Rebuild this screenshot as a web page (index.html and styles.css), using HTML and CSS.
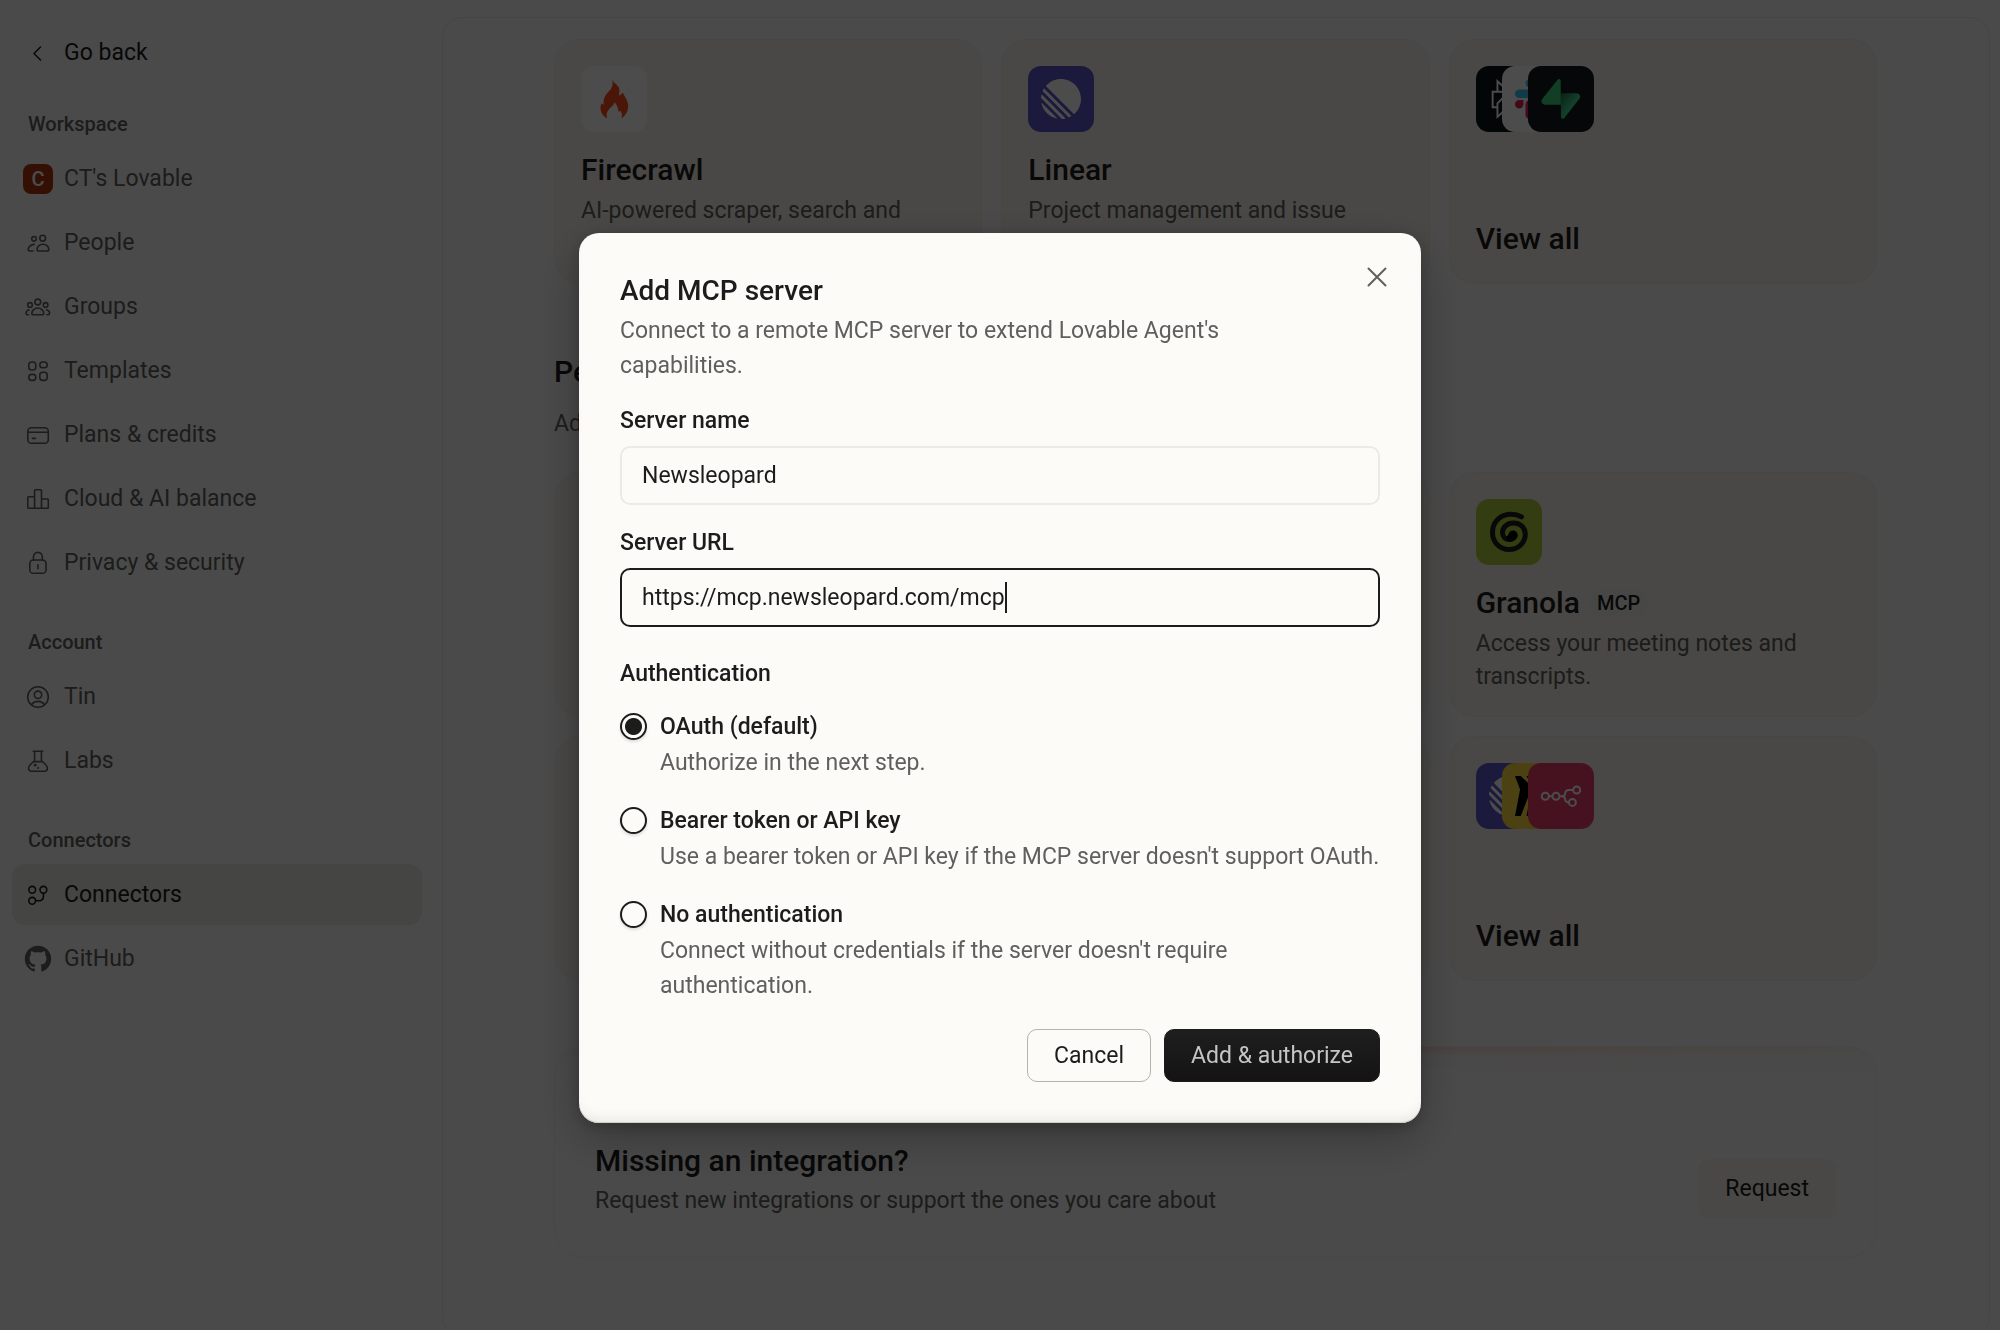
FILE: index.html
```html
<!DOCTYPE html>
<html lang="en">
    <head>
        <title>Connectors</title>
        <meta charset="UTF-8">
        <meta name="viewport" content="width=device-width, initial-scale=1.0">
        <link rel="stylesheet" href="styles.css">
    </head>
    <body>
        <!-- shared logos -->
        <svg class="defs" aria-hidden="true">
            <symbol id="linear" viewBox="0 0 100 100">
                <path fill="#fff" d="M1.22541 61.5228c-.2225-.9485.90748-1.5459 1.59638-.857L39.3342 97.1782c.6889.6889.0915 1.8189-.857 1.5964C20.0515 94.4522 5.54779 79.9485 1.22541 61.5228ZM.00189 46.8891c-.01764.2833.08887.5599.28957.7606L52.3503 99.7085c.2007.2007.4773.3075.7606.2896 2.3692-.1476 4.6938-.46 6.9624-.9259.7645-.157 1.0301-1.0963.4782-1.6481L2.57595 39.4485c-.55186-.5519-1.49117-.2863-1.64817.4782-.46592 2.2686-.77832 4.5932-.92589 6.9624ZM4.21093 29.7054c-.16649.3738-.08169.8106.20765 1.1l64.77602 64.776c.2894.2894.7262.3742 1.1.2077 1.7861-.7956 3.5171-1.6927 5.1855-2.684.5521-.328.6373-1.0867.1832-1.5407L8.43566 24.3367c-.45409-.4541-1.21271-.3689-1.54074.1832-.99132 1.6684-1.88843 3.3994-2.68399 5.1855ZM12.6587 18.074c-.3701-.3701-.393-.9637-.0443-1.3541C21.7795 6.45931 35.1114 0 49.9519 0 77.5927 0 100 22.4073 100 50.0481c0 14.8405-6.4593 28.1724-16.7199 37.3375-.3903.3487-.984.3258-1.3542-.0443L12.6587 18.074Z"/>
            </symbol>
        </svg>

        <div class="app">
            <nav class="sidebar">
                <a class="nav-item back" href="#">
                    <svg viewBox="0 0 30 30"><path d="M17.5 9 11 15.5l6.5 6.5"/></svg>
                    Go back
                </a>

                <h2>Workspace</h2>
                <a class="nav-item" href="#"><span class="avatar">C</span>CT's Lovable</a>
                <a class="nav-item" href="#">
                    <svg viewBox="0 0 30 30"><circle cx="11" cy="10.8" r="2.3"/><circle cx="19.7" cy="10.2" r="2.9"/><path d="M14 21.4c0-3 3-5.2 6-5.2s5.8 2.2 5.8 5.2c0 1-.8 1.6-1.8 1.6h-8.2c-1 0-1.8-.6-1.8-1.6zM11.2 16.4c-3.4.2-6 2.5-6 4.9 0 1.1.8 1.7 1.9 1.7H10"/></svg>
                    People
                </a>
                <a class="nav-item" href="#">
                    <svg viewBox="0 0 30 30"><circle cx="14.8" cy="10" r="2.9"/><circle cx="7" cy="12.9" r="2.3"/><circle cx="22.6" cy="12.9" r="2.3"/><path d="M8.8 21.4c0-3 3-5.4 6-5.4s6 2.4 6 5.4c0 1-.8 1.4-1.8 1.4h-8.4c-1 0-1.8-.4-1.8-1.4zM6 17.8c-1.7.6-3 1.8-3 3.3 0 1 .6 1.7 1.5 1.7h1M23.6 17.8c1.7.6 3 1.8 3 3.3 0 1-.6 1.7-1.5 1.7h-1"/></svg>
                    Groups
                </a>
                <a class="nav-item" href="#">
                    <svg viewBox="0 0 30 30"><rect x="5.8" y="6" width="7" height="8" rx="2.8"/><rect x="16.8" y="6" width="7.4" height="5.8" rx="2.8"/><rect x="5.8" y="18.4" width="7" height="6" rx="2.8"/><rect x="16.8" y="16.2" width="7.4" height="8.2" rx="2.8"/></svg>
                    Templates
                </a>
                <a class="nav-item" href="#">
                    <svg viewBox="0 0 30 30"><rect x="4.8" y="7.8" width="20.5" height="15.5" rx="3.6"/><path d="M4.8 12.2h20.5M9.4 18.4h3"/></svg>
                    Plans &amp; credits
                </a>
                <a class="nav-item" href="#">
                    <svg viewBox="0 0 30 30"><path d="M11.6 24.2V6.6c0-.5.3-.8.8-.8h5.3c.5 0 .8.3.8.8v17.6M11.6 12.7h-6c-.5 0-.8.3-.8.8v9.9c0 .5.3.8.8.8h18.9c.5 0 .8-.3.8-.8v-7.6c0-.5-.3-.8-.8-.8h-6"/></svg>
                    Cloud &amp; AI balance
                </a>
                <a class="nav-item" href="#">
                    <svg viewBox="0 0 30 30"><rect x="6.8" y="12" width="16.2" height="13.3" rx="3.4"/><path d="M10.5 12V8.8a4.4 4.4 0 0 1 8.800 0V12M14.9 16.8v4"/></svg>
                    Privacy &amp; security
                </a>

                <h2>Account</h2>
                <a class="nav-item" href="#">
                    <svg viewBox="0 0 30 30"><circle cx="15" cy="15" r="10.3"/><circle cx="15" cy="12.8" r="3.7"/><path d="M8.4 22.7c1.6-2.2 3.9-3.3 6.6-3.3s5 1.1 6.6 3.3"/></svg>
                    Tin
                </a>
                <a class="nav-item" href="#">
                    <svg viewBox="0 0 30 30"><path d="M10.2 5.2h9.6M11.6 5.2v8.4c0 .8-.3 1.4-.9 1.9-2 1.7-5.1 4.4-5.1 6.7 0 1.8 1.2 3 3 3h12.8c1.8 0 3-1.2 3-3 0-2.3-3.1-5-5.1-6.7-.6-.5-.9-1.1-.9-1.9V5.2M10.4 15.6h9.2"/><circle class="dot" cx="12.2" cy="19.2" r="1.4"/><circle class="dot" cx="15.2" cy="22" r="1"/></svg>
                    Labs
                </a>

                <h2>Connectors</h2>
                <a class="nav-item active" href="#">
                    <svg viewBox="0 0 30 30"><circle cx="9.2" cy="9.8" r="3.4"/><circle cx="20.4" cy="9.8" r="3.4"/><circle cx="9.2" cy="20.8" r="3.4"/><path d="M20.4 13.2v3c0 2.8-1.8 4.6-4.6 4.6h-3.2"/></svg>
                    Connectors
                </a>
                <a class="nav-item" href="#">
                    <svg class="solid" viewBox="-1.1 -1.1 18.2 18.2"><path d="M8 0C3.58 0 0 3.58 0 8c0 3.54 2.29 6.53 5.47 7.59.4.07.55-.17.55-.38 0-.19-.01-.82-.01-1.49-2.01.37-2.53-.49-2.69-.94-.09-.23-.48-.94-.82-1.13-.28-.15-.68-.52-.01-.53.63-.01 1.08.58 1.23.82.72 1.21 1.87.87 2.33.66.07-.52.28-.87.51-1.07-1.78-.2-3.64-.89-3.64-3.95 0-.87.31-1.59.82-2.15-.08-.2-.36-1.02.08-2.12 0 0 .67-.21 2.2.82.64-.18 1.32-.27 2-.27s1.36.09 2 .27c1.53-1.04 2.2-.82 2.2-.82.44 1.1.16 1.92.08 2.12.51.56.82 1.27.82 2.15 0 3.07-1.87 3.75-3.65 3.95.29.25.54.73.54 1.48 0 1.07-.01 1.93-.01 2.2 0 .21.15.46.55.38A8.01 8.01 0 0 0 16 8c0-4.42-3.58-8-8-8z"/></svg>
                    GitHub
                </a>
            </nav>

            <main class="panel">
                <div class="cards">
                    <article class="card">
                        <svg class="tile firecrawl" viewBox="0 0 66 66"><path fill="#fa4a19" d="M31.3 13.5c1.2 3.4 4.6 4.8 6.3 7.6 1.4 2.6.9 5.6.1 8.4 2-.5 3.2-1.6 4.2-3.3 1 4.3 5.3 7.6 5.3 13.8 0 5.4-2.6 9.4-6.700 12.5.6-2.8.8-5.200-1-7.800-.7.8-1.300 1-2 .8-.4-3.400-1.700-7.200-4.200-9.200-.2 3.200-3.200 4.600-5.300 7-2.300 2.600-3 5.800-1.800 9.200-4.300-2.600-6.700-6.400-6.700-10.800 0-1.700.3-3.200.9-4.300.6.7 1.300 1.100 2.200 1.200-.5-7.300 2.600-10.600 5.400-13.300 3.200-3.200 4.400-6.700 3.300-11.800z"/></svg>
                        <h3>Firecrawl</h3>
                        <p>AI-powered scraper, search and</p>
                    </article>
                    <article class="card">
                        <svg class="tile linear" viewBox="0 0 66 66"><use href="#linear" x="13" y="13" width="40" height="40"/></svg>
                        <h3>Linear</h3>
                        <p>Project management and issue</p>
                    </article>
                    <article class="card view-all">
                        <div class="stack">
                            <svg class="tile perplexity" viewBox="0 0 66 66"><path fill="#fff" transform="translate(13 13) scale(1.667)" d="M22.3977 7.0896h-2.3106V.0676l-7.5094 6.3542V.1577h-1.1554v6.1966L4.4904 0v7.0896H1.6023v10.3976h2.8882V24l6.932-6.3591v6.2005h1.1554v-6.0469l6.9318 6.1807v-6.4879h2.8882V7.0896zm-3.4657-4.531v4.531h-5.355l5.355-4.531zm-13.2862.0676 4.8691 4.4634H5.6458V2.6262zM2.7576 16.332V8.245h7.8476l-6.1149 6.1147v1.9723H2.7576zm2.8882 5.0404v-3.8852h.0001v-2.6488l5.7763-5.7764v7.0111l-5.7764 5.2993zm12.7086.0248-5.7766-5.1509V9.0618l5.7766 5.7766v6.5588zm2.8882-5.0652h-1.733v-1.9723L13.3948 8.245h7.8478v8.087z"/></svg>
                            <svg class="tile slack" viewBox="0 0 66 66"><g transform="translate(13 13) scale(.326)"><path fill="#e01e5a" d="M25.8 77.6a12.9 12.9 0 1 1-12.9-12.9h12.9zM32.3 77.6a12.9 12.9 0 0 1 25.8 0v32.3a12.9 12.9 0 0 1-25.8 0z"/><path fill="#36c5f0" d="M45.2 25.8a12.9 12.9 0 1 1 12.9-12.9v12.9zM45.2 32.3a12.9 12.9 0 0 1 0 25.8H12.9a12.9 12.9 0 0 1 0-25.8z"/></g></svg>
                            <svg class="tile supabase" viewBox="0 0 66 66">
                                <linearGradient id="bolt" x1="0" y1="0" x2="1" y2="1"><stop offset="0" stop-color="#1f6b45"/><stop offset=".5" stop-color="#3ecf8e"/></linearGradient>
                                <g transform="translate(13.5 13) scale(.355)"><path fill="url(#bolt)" d="M63.7076 110.284C60.8481 113.885 55.0502 111.912 54.9813 107.314L53.9738 40.0627H99.1935C107.384 40.0627 111.952 49.5228 106.859 55.9374Z"/><path fill="#3ecf7e" d="M45.317 2.07103C48.1765-1.53037 53.9745.442937 54.0434 5.041L54.4849 72.2922H9.83113C1.64038 72.2922-2.92775 62.8321 2.1655 56.4175Z"/></g>
                            </svg>
                        </div>
                        <h3>View all</h3>
                    </article>
                </div>

                <h2 class="section-title">Personal</h2>
                <p class="section-text">Add</p>

                <div class="cards">
                    <article class="card"></article>
                    <article class="card"></article>
                    <article class="card">
                        <svg class="tile granola" viewBox="0 0 66 66"><path fill="none" stroke="#1c1c1c" stroke-width="5" stroke-linecap="round" d="M45.5 17.8C42 15.8 38 15 33.5 15.3 23 16 16.5 24 16.5 33.5c0 10 7.5 17 16.5 17 9.5 0 16.3-7 16.3-15.5 0-7-5.8-11-11.8-11-6.5 0-11 4.3-11 9.5 0 4.5 3 7 7 7"/><circle cx="37" cy="36" r="4.6"/><path d="M33 43c5 0 8.5-3 8.6-7l-7-2-4.6 4z"/></svg>
                        <h3>Granola <span class="badge">MCP</span></h3>
                        <p>Access your meeting notes and transcripts.</p>
                    </article>
                    <article class="card"></article>
                    <article class="card"></article>
                    <article class="card view-all">
                        <div class="stack">
                            <svg class="tile linear" viewBox="0 0 66 66"><use href="#linear" x="13" y="13" width="40" height="40"/></svg>
                            <svg class="tile miro" viewBox="0 0 66 66"><path transform="translate(13 13) scale(1.667)" d="M17.392 0H13.9L17 4.808 10.444 0H6.949l3.102 6.3L3.494 0H0l3.05 8.131L0 24h3.494L10.05 6.985 6.949 24h3.494L17 5.494 13.899 24h3.493L24 3.672z"/></svg>
                            <svg class="tile n8n" viewBox="0 0 66 66"><g fill="none" stroke="#fff" stroke-width="2"><circle cx="17.3" cy="33.3" r="3.5"/><circle cx="28" cy="33.3" r="3.5"/><circle cx="48.7" cy="27" r="3.5"/><circle cx="44.4" cy="39.4" r="3.5"/><path d="M20.8 33.3h3.7M31.5 33.3H34c2.2 0 2.800-1 3-2.500.4-2.600 1.200-3.800 3.600-3.800h4.600M34 33.300c2.200 0 2.800 1 3 2.500.3 2.400.9 3.600 3.900 3.600"/></g></svg>
                        </div>
                        <h3>View all</h3>
                    </article>
                </div>

                <section class="missing">
                    <div>
                        <h3>Missing an integration?</h3>
                        <p>Request new integrations or support the ones you care about</p>
                    </div>
                    <button type="button" class="request">Request</button>
                </section>
            </main>
        </div>

        <div class="overlay">
            <form class="modal" role="dialog" aria-labelledby="modal-title">
                <button type="button" class="close" aria-label="Close">
                    <svg viewBox="0 0 20 20"><path d="m1.5 1.5 17 17m0-17-17 17"/></svg>
                </button>
                <h1 id="modal-title">Add MCP server</h1>
                <p class="intro">Connect to a remote MCP server to extend Lovable Agent's capabilities.</p>

                <label class="field-label" for="server-name">Server name</label>
                <input class="field" id="server-name" type="text" value="Newsleopard">

                <label class="field-label" for="server-url">Server URL</label>
                <input class="field current" id="server-url" type="text" value="https://mcp.newsleopard.com/mcp">

                <fieldset>
                    <legend>Authentication</legend>
                    <div class="option">
                        <input type="radio" name="auth" id="oauth" checked>
                        <label for="oauth">OAuth (default)</label>
                        <p>Authorize in the next step.</p>
                    </div>
                    <div class="option">
                        <input type="radio" name="auth" id="bearer">
                        <label for="bearer">Bearer token or API key</label>
                        <p>Use a bearer token or API key if the MCP server doesn't support OAuth.</p>
                    </div>
                    <div class="option">
                        <input type="radio" name="auth" id="none">
                        <label for="none">No authentication</label>
                        <p>Connect without credentials if the server doesn't require authentication.</p>
                    </div>
                </fieldset>

                <div class="actions">
                    <button type="button" class="cancel">Cancel</button>
                    <button type="submit" class="submit">Add &amp; authorize</button>
                </div>
            </form>
        </div>
    </body>
</html>
```
FILE: styles.css
```css
* {
    box-sizing: border-box;
}

body {
    margin: 0;
    height: 100vh;
    overflow: hidden;
    background: #f9f9f9;
    color: #1c1c1c;
    font-family: Roboto, "Liberation Sans", sans-serif;
    font-size: 23px;
}

h1, h2, h3, p {
    margin: 0;
    font-weight: 500;
}

p {
    font-weight: 400;
    color: #5f5f5d;
}

button, input {
    font: inherit;
    color: inherit;
}

.defs {
    display: none;
}

.app {
    display: flex;
    height: 100vh;
}

/* sidebar */
.sidebar {
    flex: none;
    width: 442px;
    padding: 22px 20px 0 12px;
    display: flex;
    flex-direction: column;
    gap: 3px;
}

.sidebar h2 {
    margin: 33px 16px 8px;
    font-size: 20px;
    line-height: 26px;
    color: #5f5f5d;
}

.sidebar .back + h2 {
    margin-top: 25px;
}

.nav-item {
    display: flex;
    align-items: center;
    gap: 11px;
    height: 61px;
    padding: 0 11px;
    border-radius: 13px;
    color: #5f5f5d;
    text-decoration: none;
}

.nav-item svg {
    width: 30px;
    height: 30px;
    fill: none;
    stroke: currentColor;
    stroke-width: 1.6;
    stroke-linecap: round;
    stroke-linejoin: round;
}

.nav-item svg .dot,
.nav-item svg.solid {
    fill: currentColor;
    stroke: none;
}

.nav-item.back,
.nav-item.active {
    color: #1c1c1c;
}

.nav-item.active {
    background: #e8e6e0;
}

.avatar {
    width: 30px;
    height: 30px;
    border-radius: 8px;
    background: #b0350f;
    color: #fff;
    font-size: 20px;
    font-weight: 500;
    line-height: 30px;
    text-align: center;
}

/* main panel */
.panel {
    flex: 1;
    height: calc(100vh - 10px);
    margin: 17px 10px 0 0;
    padding: 21px 112px 0 111px;
    border: 1px solid #e8e8e6;
    border-radius: 20px;
    background: #f7f7f7;
}

.cards {
    display: grid;
    grid-template-columns: repeat(3, 1fr);
    gap: 19px;
}

.card {
    display: flex;
    flex-direction: column;
    height: 245px;
    padding: 26px;
    border: 1px solid #f1ece4;
    border-radius: 26px;
    background: #f6f1ea;
}

.card h3 {
    display: flex;
    align-items: center;
    gap: 10px;
    margin-top: 20px;
    font-size: 30px;
    line-height: 36px;
}

.card p {
    margin-top: 6px;
    line-height: 33px;
}

.card.view-all {
    justify-content: space-between;
}

.tile {
    flex: none;
    width: 66px;
    height: 66px;
    border-radius: 13px;
}

.stack {
    display: flex;
}

.stack .tile + .tile {
    margin-left: -40px;
}

.firecrawl,
.slack {
    background: #fff;
}

.linear {
    background: #5b58cc;
}

.perplexity {
    background: #091717;
}

.supabase {
    background: #11181c;
}

.granola {
    background: #b0c83c;
}

.miro {
    background: #fcd93c;
}

.n8n {
    background: #ea3d68;
}

.badge {
    padding: 0 7px;
    border-radius: 7px;
    background: #efefec;
    font-size: 20px;
    line-height: 26px;
}

.section-title {
    margin-top: 70px;
    font-size: 30px;
    line-height: 36px;
}

.section-text {
    margin: 17px 0 32px;
    line-height: 33px;
}

.missing {
    display: flex;
    justify-content: space-between;
    align-items: flex-end;
    margin-top: 65px;
    padding: 96px 40px 39px;
    border: 1px solid #eeeeec;
    border-radius: 30px;
    background:
        linear-gradient(transparent, rgba(247, 247, 247, .8) 9px, #f7f7f7) 0 0 / 100% 26px no-repeat,
        linear-gradient(90deg, #e4edf2, #eadff6 30%, #f9d3de 55%, #f7ddd3 75%, #f4f1e2) 0 0 / 100% 26px no-repeat;
}

.missing h3 {
    font-size: 30px;
    line-height: 36px;
}

.missing p {
    margin-top: 4px;
    line-height: 35px;
}

.request {
    height: 59px;
    padding: 0 27px;
    border: 0;
    border-radius: 10px;
    background: #f6f1ea;
}

/* dialog */
.overlay {
    position: fixed;
    inset: 0;
    display: flex;
    justify-content: center;
    align-items: center;
    padding-top: 25px;
    background: rgba(0, 0, 0, .7);
}

.modal {
    position: relative;
    width: 842px;
    padding: 41px;
    border-radius: 20px;
    background: #fcfbf8;
    box-shadow: 0 16px 48px rgba(0, 0, 0, .25), 0 4px 16px rgba(0, 0, 0, .2),
        inset 0 -1px 0 #cfcec9, inset 0 -10px 14px -8px rgba(0, 0, 0, .1);
}

.modal h1 {
    font-size: 28px;
    line-height: 33px;
}

.intro {
    max-width: 640px;
    margin: 6px 0 25px;
    line-height: 35px;
}

.close {
    position: absolute;
    top: 30px;
    right: 30px;
    display: flex;
    padding: 4px;
    border: 0;
    background: none;
    color: #5f5f5d;
}

.close svg {
    width: 20px;
    height: 20px;
    fill: none;
    stroke: currentColor;
    stroke-width: 2;
    stroke-linecap: round;
}

.field-label {
    display: block;
    margin-bottom: 12px;
    font-weight: 500;
    line-height: 26px;
}

.field {
    display: block;
    width: 100%;
    height: 59px;
    margin-bottom: 25px;
    padding: 0 20px;
    border: 2px solid #eceae4;
    border-radius: 10px;
    background: transparent;
    outline: none;
}

.field.current {
    margin-bottom: 34px;
    border-color: #1c1c1c;
    /* text cursor */
    background: linear-gradient(#1c1c1c, #1c1c1c) 383px center / 2px 31px no-repeat;
}

fieldset {
    display: flex;
    flex-direction: column;
    gap: 23px;
    margin: 0;
    padding: 0;
    border: 0;
}

legend {
    margin-bottom: 22px;
    padding: 0;
    font-weight: 500;
    line-height: 26px;
}

.option {
    display: grid;
    grid-template-columns: 27px 1fr;
    column-gap: 13px;
    align-items: center;
}

.option label {
    font-weight: 500;
    line-height: 36px;
}

.option p {
    grid-column: 2;
    line-height: 35px;
}

.option input {
    width: 27px;
    height: 27px;
    margin: 0;
    border: 2px solid #1c1c1c;
    border-radius: 50%;
    background: #fcfbf8;
    box-shadow: 0 2px 3px rgba(0, 0, 0, .12);
    appearance: none;
}

.option input:checked {
    background: radial-gradient(circle, #1c1c1c 8px, transparent 9px);
}

.actions {
    display: flex;
    justify-content: flex-end;
    gap: 13px;
    margin-top: 26px;
}

.actions button {
    height: 53px;
    padding: 0 26px;
    border: 1px solid #b4b3b0;
    border-radius: 10px;
    background: transparent;
}

.actions .submit {
    border-color: #1c1c1c;
    background: linear-gradient(#1e1e1e, #141414);
    color: #c6c5c3;
}
```
